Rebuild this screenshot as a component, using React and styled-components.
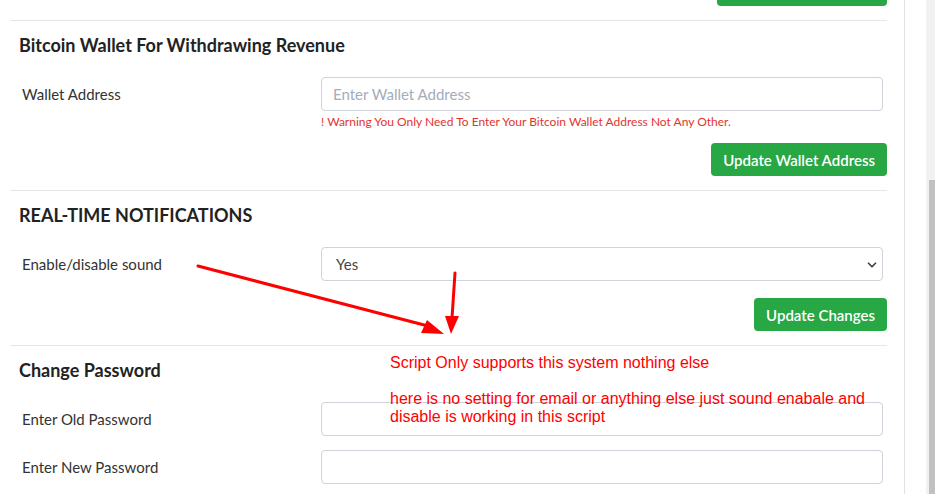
import React from 'react'
import styled, { createGlobalStyle } from 'styled-components'
import { ChevronDown } from 'lucide-react'

const GlobalStyle = createGlobalStyle`
  html, body, #root {
    margin: 0;
    padding: 0;
    height: 100%;
    overflow: hidden;
    background: #fff;
  }
  body {
    font-family: Lato, "Liberation Sans", Arial, sans-serif;
  }
  * { box-sizing: border-box; }
`

const Page = styled.div`
  display: flex;
  align-items: stretch;
  width: 100vw;
  height: 100vh;
  min-height: 494px;
  overflow: hidden;
  position: relative;
`

const Main = styled.div`
  flex: 1;
  display: flex;
  background: #fff;
`

const Card = styled.div`
  width: 905px;
  border-right: 1px solid #e2e2e2;
  padding: 0 17px 0 10px;
`

const ScrollTrack = styled.div`
  flex: 0 0 9px;
  display: flex;
  flex-direction: column;
  background: #f1f1f1;
  padding: 180px 0 0 3px;
`

const ScrollThumb = styled.div`
  flex: 1;
  background: #c1c1c1;
`

const Section = styled.section`
  border-bottom: 1px solid #e6e6e6;
  padding-bottom: 14px;
  &:last-child { border-bottom: none; }
`

const TopCut = styled.div`
  display: flex;
  justify-content: flex-end;
  margin-top: -27px;
`

const Title = styled.h3`
  margin: 14px 0 22px 9px;
  font-size: 18px;
  line-height: 20px;
  font-weight: 700;
  color: #222;
`

const Row = styled.div`
  display: grid;
  grid-template-columns: 311px 1fr;
  align-items: start;
  padding-right: 4px;
  & + & { margin-top: 14px; }
`

const Label = styled.label`
  padding-left: 12px;
  font-size: 15px;
  line-height: 34px;
  color: #333;
`

const Field = styled.div`
  display: flex;
  flex-direction: column;
  position: relative;
`

const Input = styled.input`
  height: 34px;
  width: 100%;
  border: 1px solid #ced4da;
  border-radius: 4px;
  padding: 0 11px;
  font-family: inherit;
  font-size: 15px;
  color: #444;
  outline: none;
  &::placeholder { color: #a3adb8; }
`

const Select = styled.select`
  appearance: none;
  height: 34px;
  width: 100%;
  border: 1px solid #ced4da;
  border-radius: 4px;
  padding: 0 14px;
  background: #fff;
  font-family: inherit;
  font-size: 15px;
  color: #444;
  outline: none;
`

const Caret = styled(ChevronDown)`
  position: absolute;
  right: 4px;
  top: 11px;
  color: #444;
  pointer-events: none;
`

const Warning = styled.div`
  margin-top: 4px;
  font-size: 12px;
  line-height: 14px;
  color: #e3342f;
`

const Actions = styled.div`
  display: flex;
  justify-content: flex-end;
  margin-top: ${p => p.$gap || 14}px;
`

const Button = styled.button`
  height: 33px;
  padding: 0 12px;
  border: none;
  border-radius: 4px;
  background: #28a745;
  color: #fff;
  font-family: inherit;
  font-size: 15px;
  font-weight: 600;
  width: ${p => p.$w ? p.$w + 'px' : 'auto'};
`

const Overlay = styled.svg`
  position: absolute;
  left: 0;
  top: 0;
  pointer-events: none;
`

const Note = styled.div`
  position: absolute;
  left: 390px;
  top: 354px;
  width: 490px;
  font-family: "Liberation Sans", Arial, sans-serif;
  font-size: 16px;
  line-height: 18px;
  color: #f00;
  p { margin: 0 0 18px; }
`

function App() {
  return (
    <Page>
      <GlobalStyle />
      <Main>
        <Card>
          <Section>
            <TopCut>
              <Button $w={170} aria-label="Save settings" />
            </TopCut>
          </Section>

          <Section>
            <Title>Bitcoin Wallet For Withdrawing Revenue</Title>
            <Row>
              <Label>Wallet Address</Label>
              <Field>
                <Input placeholder="Enter Wallet Address" />
                <Warning>! Warning You Only Need To Enter Your Bitcoin Wallet Address Not Any Other.</Warning>
              </Field>
            </Row>
            <Actions>
              <Button>Update Wallet Address</Button>
            </Actions>
          </Section>

          <Section>
            <Title>REAL-TIME NOTIFICATIONS</Title>
            <Row>
              <Label>Enable/disable sound</Label>
              <Field>
                <Select defaultValue="1">
                  <option value="1">Yes</option>
                  <option value="0">No</option>
                </Select>
                <Caret size={14} strokeWidth={3} />
              </Field>
            </Row>
            <Actions $gap={17}>
              <Button>Update Changes</Button>
            </Actions>
          </Section>

          <Section>
            <Title>Change Password</Title>
            <Row>
              <Label>Enter Old Password</Label>
              <Field><Input type="password" /></Field>
            </Row>
            <Row>
              <Label>Enter New Password</Label>
              <Field><Input type="password" /></Field>
            </Row>
          </Section>
        </Card>
      </Main>
      <ScrollTrack>
        <ScrollThumb />
      </ScrollTrack>

      <Overlay width="935" height="494" viewBox="0 0 935 494">
        <g stroke="#f00" strokeWidth="3" strokeLinecap="round" fill="none">
          <line x1="198" y1="266" x2="428" y2="326" />
          <line x1="455" y1="273" x2="452" y2="318" />
        </g>
        <g fill="#f00">
          <polygon points="444,334 421,333 427,320" />
          <polygon points="451,334 445,316 459,316" />
        </g>
      </Overlay>
      <Note>
        <p>Script Only supports this system nothing else</p>
        <div>here is no setting for email or anything else just sound enabale and disable is working in this script</div>
      </Note>
    </Page>
  )
}

export default App
